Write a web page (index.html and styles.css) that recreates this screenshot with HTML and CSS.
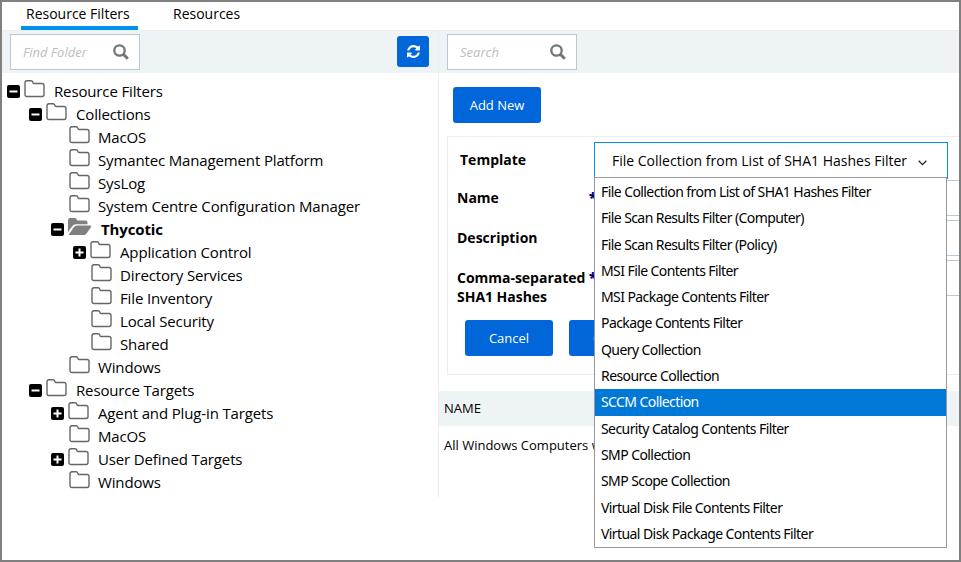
FILE: index.html
```
<!DOCTYPE html>
<html lang="en">
<head>
<meta charset="utf-8">
<title>Resource Filters</title>
<link rel="stylesheet" href="styles.css">
</head>
<body>
<svg class="defs" width="0" height="0">
  <symbol id="folder" viewBox="0 0 21 18"><path d="M1 3Q1 .8 3 .8H7Q8.5 .8 8.8 2.2Q9 3.5 10 3.5H18Q20 3.5 20 5.5V14.5Q20 16.5 18 16.5H3Q1 16.5 1 14.5Z" fill="#fff" stroke="#666" stroke-width="1.4"/></symbol>
  <symbol id="open" viewBox="0 0 24 18"><path d="M0 14V2Q0 0 2 0H7Q9 0 9 2.5H17.5Q19.5 2.5 19.5 4.5V6.3H8Q5.5 6.3 4 8.5ZM1 16.2L6 9Q7 7.5 9 7.5H22.5Q24 7.5 23 9L18.5 15.5Q17.5 17 16 17H1.5Q.5 17 1 16.2Z" fill="#808080"/></symbol>
  <symbol id="minus" viewBox="0 0 13 13"><rect width="13" height="13" rx="2"/><path d="M2.5 6.5H10.500" stroke="#fff" stroke-width="2"/></symbol>
  <symbol id="plus" viewBox="0 0 13 13"><rect width="13" height="13" rx="2"/><path d="M2.500 6.500H10.500M6.500 2.500V10.500" stroke="#fff" stroke-width="2"/></symbol>
  <symbol id="search" viewBox="0 0 16 16"><circle cx="6.500" cy="6.500" r="5.200" fill="none" stroke="#757575" stroke-width="2.300"/><path d="M10.300 10.300L14.800 14.800" stroke="#757575" stroke-width="3"/></symbol>
  <symbol id="sync" viewBox="0 0 1536 1536"><path fill="#fff" d="M1511 928q0 5-1 7-64 268-268 434.500T764 1536q-146 0-282.500-55T238 1324l-129 129q-19 19-45 19t-45-19-19-45V960q0-26 19-45t45-19h448q26 0 45 19t19 45-19 45l-137 137q71 66 161 102t187 36q134 0 250-65t186-179q11-17 53-117 8-23 30-23h192q13 0 22.500 9.500t9.500 22.500zm25-800v448q0 26-19 45t-45 19h-448q-26 0-45-19t-19-45 19-45l138-138Q969 256 768 256q-134 0-250 65T332 500q-11 17-53 117-8 23-30 23H50q-13 0-22.500-9.500T18 608v-7q65-268 270-434.500T768 0q146 0 284 55.500T1297 212l130-129q19-19 45-19t45 19 19 45z"/></symbol>
</svg>
<div class="window">
  <nav class="tabs"><span class="tab active">Resource Filters</span><span class="tab">Resources</span></nav>
  <div class="body">
    <aside class="left">
      <div class="bar"><div class="field"><span>Find Folder</span><svg><use href="#search"/></svg></div><div class="refresh"><svg><use href="#sync"/></svg></div></div>
      <ul class="tree">
        <li class="l0"><svg class="tog"><use href="#minus"/></svg><svg class="fold"><use href="#folder"/></svg><span>Resource Filters</span></li>
        <li class="l1"><svg class="tog"><use href="#minus"/></svg><svg class="fold"><use href="#folder"/></svg><span>Collections</span></li>
        <li class="l2"><i class="tog"></i><svg class="fold"><use href="#folder"/></svg><span>MacOS</span></li>
        <li class="l2"><i class="tog"></i><svg class="fold"><use href="#folder"/></svg><span>Symantec Management Platform</span></li>
        <li class="l2"><i class="tog"></i><svg class="fold"><use href="#folder"/></svg><span>SysLog</span></li>
        <li class="l2"><i class="tog"></i><svg class="fold"><use href="#folder"/></svg><span>System Centre Configuration Manager</span></li>
        <li class="l2 current"><svg class="tog"><use href="#minus"/></svg><svg class="fold"><use href="#open"/></svg><span>Thycotic</span></li>
        <li class="l3"><svg class="tog"><use href="#plus"/></svg><svg class="fold"><use href="#folder"/></svg><span>Application Control</span></li>
        <li class="l3"><i class="tog"></i><svg class="fold"><use href="#folder"/></svg><span>Directory Services</span></li>
        <li class="l3"><i class="tog"></i><svg class="fold"><use href="#folder"/></svg><span>File Inventory</span></li>
        <li class="l3"><i class="tog"></i><svg class="fold"><use href="#folder"/></svg><span>Local Security</span></li>
        <li class="l3"><i class="tog"></i><svg class="fold"><use href="#folder"/></svg><span>Shared</span></li>
        <li class="l2"><i class="tog"></i><svg class="fold"><use href="#folder"/></svg><span>Windows</span></li>
        <li class="l1"><svg class="tog"><use href="#minus"/></svg><svg class="fold"><use href="#folder"/></svg><span>Resource Targets</span></li>
        <li class="l2"><svg class="tog"><use href="#plus"/></svg><svg class="fold"><use href="#folder"/></svg><span>Agent and Plug-in Targets</span></li>
        <li class="l2"><i class="tog"></i><svg class="fold"><use href="#folder"/></svg><span>MacOS</span></li>
        <li class="l2"><svg class="tog"><use href="#plus"/></svg><svg class="fold"><use href="#folder"/></svg><span>User Defined Targets</span></li>
        <li class="l2"><i class="tog"></i><svg class="fold"><use href="#folder"/></svg><span>Windows</span></li>
      </ul>
    </aside>
    <main class="right">
      <div class="bar"><div class="field"><span>Search</span><svg><use href="#search"/></svg></div></div>
      <div class="btn add">Add New</div>
      <section class="form">
        <div class="row template"><label>Template</label>
          <div class="select"><span>File Collection from List of SHA1 Hashes Filter</span><svg width="9" height="6" viewBox="0 0 9 6"><path d="M.7 .8L4.500 4.600L8.300 .8" fill="none" stroke="#222" stroke-width="1.300"/></svg>
            <ul class="menu">
              <li>File Collection from List of SHA1 Hashes Filter</li>
              <li>File Scan Results Filter (Computer)</li>
              <li>File Scan Results Filter (Policy)</li>
              <li>MSI File Contents Filter</li>
              <li>MSI Package Contents Filter</li>
              <li>Package Contents Filter</li>
              <li>Query Collection</li>
              <li>Resource Collection</li>
              <li class="hover">SCCM Collection</li>
              <li>Security Catalog Contents Filter</li>
              <li>SMP Collection</li>
              <li>SMP Scope Collection</li>
              <li>Virtual Disk File Contents Filter</li>
              <li>Virtual Disk Package Contents Filter</li>
            </ul>
          </div>
        </div>
        <div class="row"><label>Name</label><b class="req">*</b><div class="input"></div></div>
        <div class="row"><label>Description</label><b class="req"></b><div class="input"></div></div>
        <div class="row tall"><label class="wide">Comma-separated<br>SHA1 Hashes</label><b class="req">*</b><div class="input"></div></div>
        <div class="actions"><div class="btn">Cancel</div><div class="btn">Create</div></div>
      </section>
      <div class="thead">NAME</div>
      <div class="trow">All Windows Computers with</div>
    </main>
  </div>
</div>
</body>
</html>
```
FILE: styles.css
```
* { box-sizing: border-box; }
body { margin: 0; font-family: "Open Sans", sans-serif; color: #000; background: #fff; }
svg { display: block; flex: none; }
.defs { position: absolute; }
.window { width: 961px; height: 562px; border: 2px solid #808080; overflow: hidden; }
.tabs { height: 28px; display: flex; padding-left: 19px; gap: 30px; font-size: 14px; line-height: 24px; }
.tab { height: 28px; padding: 0 5px; white-space: nowrap; }
.tab.active { width: 117px; border-bottom: 4px solid #0091ea; }
.body { display: flex; height: 467px; }
.left { width: 436px; flex: none; }
.right { flex: 1; min-width: 0; border-left: 1px solid #e8eef2; }
.bar { height: 43px; background: #eef3f6; border-top: 1px solid #e8eef2; display: flex; justify-content: space-between; align-items: flex-start; padding: 3px 9px 0 8px; }
.field { width: 130px; height: 36px; background: #fff; border: 1px solid #b9c9d6; display: flex; align-items: center; justify-content: space-between; padding: 0 10px 0 12px; font-size: 13px; font-style: italic; color: #bdbdbd; }
.field svg { width: 16px; height: 16px; }
.refresh { width: 32px; height: 31px; margin-top: 2px; background: #0066d9; border-radius: 3px; display: flex; align-items: center; justify-content: center; }
.refresh svg { width: 13px; height: 13px; }
.tree { list-style: none; margin: 0; padding: 7px 0 0 5px; font-size: 15px; letter-spacing: -.14px; }
.tree li { height: 23px; line-height: 23px; display: flex; align-items: flex-start; white-space: nowrap; }
.tog { width: 13px; height: 13px; margin: 5px 4px 0 0; flex: none; }
.fold { width: 21px; height: 18px; margin-right: 9px; }
i.tog { margin-right: 5px; }
i.tog + .fold { margin-right: 8px; }
.l1 { padding-left: 22px; }
.l2 { padding-left: 44px; }
.l3 { padding-left: 66px; }
.current .fold { width: 24px; }
.current span { font-weight: 700; }
.right .bar { padding-left: 8px; }
.btn { width: 88px; height: 36px; line-height: 36px; background: #0066d9; border-radius: 3px; color: #fff; text-align: center; font-size: 13px; }
.add { margin: 14px 0 0 14px; }
.form { margin: 13px -20px 0 8px; height: 239px; border: 1px solid #e8eef2; padding-top: 5px; }
.row { display: flex; height: 40px; padding-left: 9px; font-size: 14px; font-weight: 700; line-height: 19px; }
.row label { width: 132px; padding-top: 8px; white-space: nowrap; }
.row .wide { letter-spacing: -.02px; }
.row.template { height: 38px; }
.template label { padding: 8px 0 0 3px; width: 137px; }
.req { width: 15px; padding-top: 8px; color: #00008b; }
.input { flex: 1; height: 36px; border: 1px solid #b9c9d6; }
.tall { height: 60px; }
.tall .input { height: 36px; }
.select { position: relative; width: 354px; height: 37px; border: 1px solid #0b8fe0; display: flex; align-items: center; padding-left: 17px; gap: 11px; background: #fff; font-weight: 400; font-size: 14px; white-space: nowrap; }
.select svg { margin-top: 4px; }
.menu { position: absolute; z-index: 2; left: -1px; top: 34px; width: 353px; height: 371px; list-style: none; margin: 0; padding: 1px 0; border: 1px solid #999; background: #fff; font-family: "Noto Sans", sans-serif; font-size: 14px; letter-spacing: -.58px; }
.menu li { height: 26.3px; line-height: 26px; padding-left: 6px; }
.menu .hover { background: #0078d7; color: #fff; }
.actions { display: flex; gap: 16px; padding-left: 17px; }
.thead { height: 35px; margin-top: 16px; background: #eef3f6; padding-left: 5px; line-height: 35px; font-size: 13px; }
.trow { padding-left: 5px; line-height: 39px; font-size: 13px; }
```
